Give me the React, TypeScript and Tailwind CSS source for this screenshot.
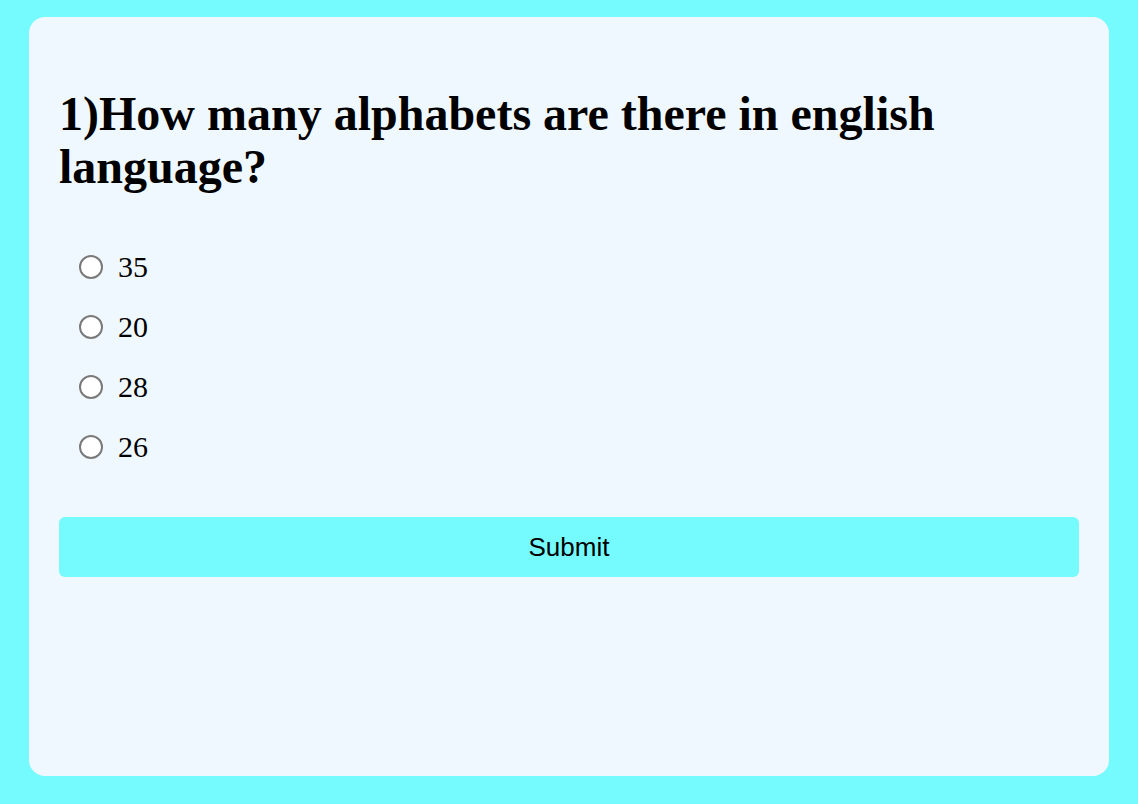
import { useState } from "react";

const options = ["35", "20", "28", "26"];

export default function App() {
  const [picked, setPicked] = useState<string | null>(null);

  return (
    <div className="min-h-screen bg-[#75fbfd] px-[29px] pt-[17px] pb-[28px]">
      {/* Quiz card */}
      <div className="h-[759px] rounded-2xl bg-[#f0f8ff] px-[30px] pt-[70px]">
        <h1
          className="text-[48px] font-bold leading-[53px] text-black"
          style={{ fontFamily: "'Liberation Serif', 'Times New Roman', serif" }}
        >
          1)How many alphabets are there in english language?
        </h1>

        <ul className="mt-[44px]">
          {options.map((opt) => (
            <li key={opt} className="flex h-[60px] items-center pl-[20px]">
              <label className="flex cursor-pointer items-center gap-[15px]">
                <input
                  type="radio"
                  name="answer"
                  checked={picked === opt}
                  onChange={() => setPicked(opt)}
                  className="h-[24px] w-[24px] appearance-none rounded-full border-2 border-[#7a7a7a] bg-white checked:border-[7px] checked:border-[#0075ff]"
                />
                <span
                  className="text-[30px] leading-[34px] text-black"
                  style={{ fontFamily: "'Liberation Serif', 'Times New Roman', serif" }}
                >
                  {opt}
                </span>
              </label>
            </li>
          ))}
        </ul>

        <button
          className="mt-[40px] flex h-[60px] w-full items-center justify-center rounded-md bg-[#75fbfd] text-[26px] text-black"
          style={{ fontFamily: "'Liberation Sans', Arial, sans-serif" }}
        >
          Submit
        </button>
      </div>
    </div>
  );
}
